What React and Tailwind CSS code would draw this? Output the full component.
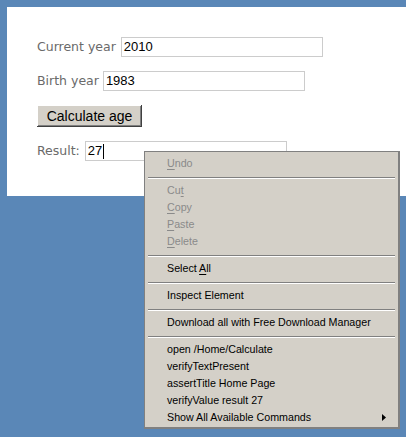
import React from "react";

function Sep() {
  return (
    <div className="h-[10px] pt-[5px] px-[3px]">
      <div className="h-px bg-[#808080]" />
      <div className="h-px bg-white" />
    </div>
  );
}

function Item({ children, disabled, arrow }) {
  return (
    <div
      className={`h-[17px] flex items-center pl-[22px] pr-[12px] leading-none ${
        disabled ? "text-[#8a8a8a]" : "text-black"
      }`}
    >
      <span className="flex-1 whitespace-nowrap">{children}</span>
      {arrow && (
        <svg width="4" height="7" viewBox="0 0 4 7">
          <path d="M0 0 L4 3.5 L0 7 Z" fill="#000" />
        </svg>
      )}
    </div>
  );
}

const U = ({ children }) => <span className="underline underline-offset-2">{children}</span>;

export default function App() {
  return (
    <div className="relative w-[406px] h-[437px] bg-[#5a87b7] overflow-hidden">
      <div className="pl-[7px] pt-[7px]">
        <div className="bg-white h-[189px] pl-[30px] pt-[30px] flex flex-col gap-[14px] [font-family:'DejaVu_Sans',sans-serif] text-[12.5px] text-[#6a6a6a]">
          <div className="flex items-center h-[20px]">
            <span className="mr-[5px]">Current year</span>
            <div className="w-[202px] h-[20px] border border-[#cccccc] pl-[2px] flex items-center text-black text-[13px] [font-family:'Liberation_Sans',sans-serif]">
              2010
            </div>
          </div>
          <div className="flex items-center h-[20px]">
            <span className="mr-[4px]">Birth year</span>
            <div className="w-[202px] h-[20px] border border-[#cccccc] pl-[2px] flex items-center text-black text-[13px] [font-family:'Liberation_Sans',sans-serif]">
              1983
            </div>
          </div>
          <div className="flex">
            <div className="w-[105px] h-[22px] bg-[#d4d0c8] flex items-center justify-center text-black text-[14px] [font-family:'Liberation_Sans',sans-serif] shadow-[inset_-1px_-1px_#404040,inset_1px_1px_#ffffff,inset_-2px_-2px_#808080]">
              Calculate age
            </div>
          </div>
          <div className="flex items-center h-[20px]">
            <span className="mr-[5px]">Result:</span>
            <div className="w-[202px] h-[20px] border border-[#cccccc] pl-[2px] flex items-center text-black text-[13px] [font-family:'Liberation_Sans',sans-serif]">
              27
              <span className="inline-block w-px h-[15px] bg-black ml-px" />
            </div>
          </div>
        </div>
      </div>

      <div className="absolute left-[144px] top-[151px] w-[256px] h-[278px] bg-[#d4d0c8] border-t border-l border-r-2 border-b-2 border-[#808080] pt-[3px] [font-family:'Liberation_Sans',sans-serif] text-[10.7px]">
        <Item disabled>
          <U>U</U>ndo
        </Item>
        <Sep />
        <Item disabled>
          Cu<U>t</U>
        </Item>
        <Item disabled>
          <U>C</U>opy
        </Item>
        <Item disabled>
          <U>P</U>aste
        </Item>
        <Item disabled>
          <U>D</U>elete
        </Item>
        <Sep />
        <Item>
          Select <U>A</U>ll
        </Item>
        <Sep />
        <Item>Inspect Element</Item>
        <Sep />
        <Item>Download all with Free Download Manager</Item>
        <Sep />
        <Item>open /Home/Calculate</Item>
        <Item>verifyTextPresent</Item>
        <Item>assertTitle Home Page</Item>
        <Item>verifyValue result 27</Item>
        <Item arrow>Show All Available Commands</Item>
      </div>
    </div>
  );
}
